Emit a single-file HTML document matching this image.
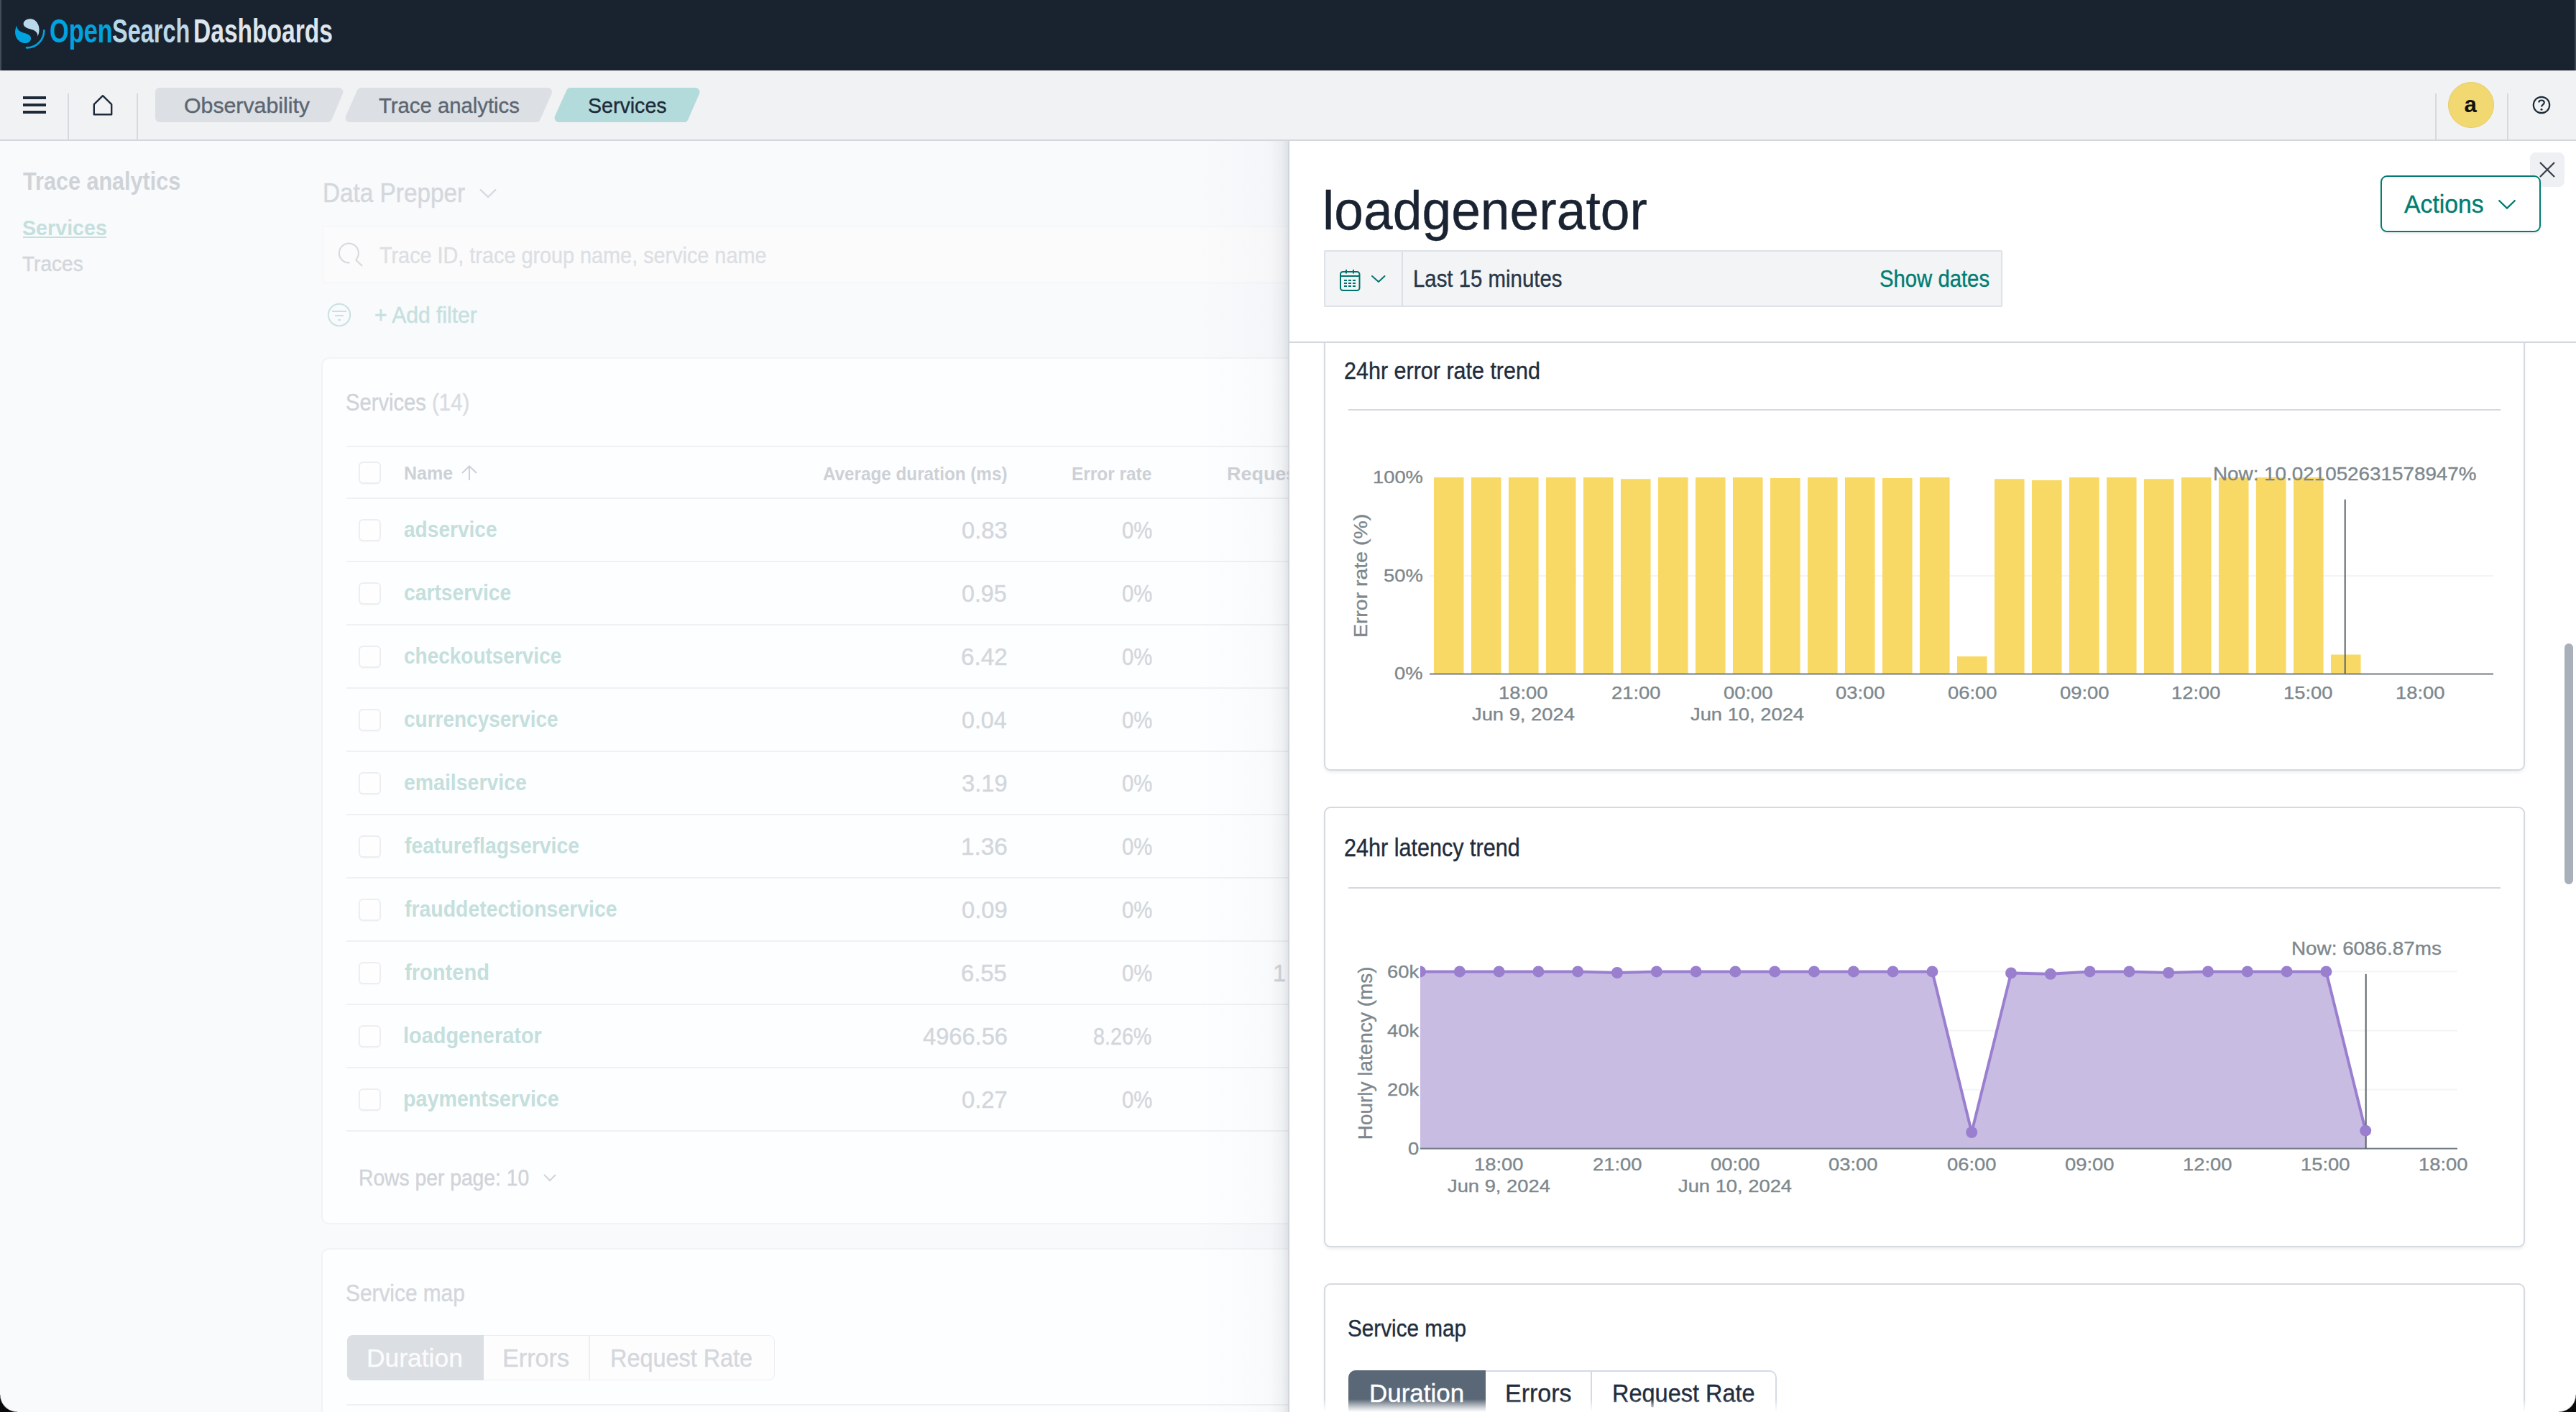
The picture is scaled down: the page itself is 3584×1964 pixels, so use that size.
<!DOCTYPE html><html><head><meta charset="utf-8"><title>OpenSearch Dashboards - Services</title><style>
html,body{margin:0;padding:0;width:3584px;height:1964px;overflow:hidden;background:#fff;font-family:"Liberation Sans",sans-serif}
.t{position:absolute;white-space:nowrap;transform-origin:0 0}
</style></head><body>
<div style="position:absolute;left:0px;top:0px;width:3584px;height:98px;background:#18232f"></div>
<div style="position:absolute;left:0px;top:0px;width:2px;height:98px;background:#444d57"></div>
<div style="position:absolute;left:3582px;top:0px;width:2px;height:98px;background:#3f4751"></div>
<svg style="position:absolute;left:0;top:0" width="100" height="98" viewBox="0 0 100 98">
<path d="M52.4,50.8 C57,42 54.5,28.5 43.5,26.3 C37,25.2 31.8,29.5 32.8,34.3 C33.8,38.8 40.5,39.8 45.8,41.6 C50,43.2 52.8,46.5 52.4,50.8 Z" fill="#b9d9eb"/>
<path d="M23.4,35.8 C18.6,44 21.2,56.8 32,59.7 C38.5,61.3 43.6,57.6 43,52.4 C42.4,47.8 35.5,46.7 30.3,44.8 C26.2,43.3 23.6,40.2 23.4,35.8 Z" fill="#00a3e0"/>
<path d="M61.3,42.4 A24,24 0 0 1 37,66.4" fill="none" stroke="#00a3e0" stroke-width="2.6" stroke-linecap="round"/>
</svg>
<div class="t" style="font-family:'Liberation Sans';font-size:45.78px;line-height:45.78px;font-weight:700;color:#00a3e0;left:68.80px;top:21.20px;transform:scaleX(0.7500)">Open</div>
<div class="t" style="font-family:'Liberation Sans';font-size:45.78px;line-height:45.78px;font-weight:700;color:#b9d9eb;left:155.59px;top:21.20px;transform:scaleX(0.7094)">Search</div>
<div class="t" style="font-family:'Liberation Sans';font-size:45.78px;line-height:45.78px;font-weight:700;color:#dfe5ec;left:269.20px;top:21.20px;transform:scaleX(0.7331)">Dashboards</div>
<div style="position:absolute;left:0px;top:98px;width:3584px;height:96px;background:#f1f2f4;border-bottom:2px solid #d3d7dc"></div>
<div style="position:absolute;left:32px;top:134px;width:32px;height:4px;background:#1d2a3a"></div>
<div style="position:absolute;left:32px;top:144px;width:32px;height:4px;background:#1d2a3a"></div>
<div style="position:absolute;left:32px;top:154px;width:32px;height:4px;background:#1d2a3a"></div>
<div style="position:absolute;left:94px;top:130px;width:2px;height:65px;background:#d6d9de"></div>
<div style="position:absolute;left:190px;top:130px;width:2px;height:65px;background:#d6d9de"></div>
<div style="position:absolute;left:3388px;top:130px;width:2px;height:65px;background:#d6d9de"></div>
<div style="position:absolute;left:3488px;top:130px;width:2px;height:65px;background:#d6d9de"></div>
<svg style="position:absolute;left:0;top:98px" width="1000" height="96" viewBox="0 98 1000 96">
<path d="M143,133.2 L130.8,145.2 L130.8,159.2 L155.2,159.2 L155.2,145.2 Z" fill="none" stroke="#1d2a3a" stroke-width="2.4" stroke-linejoin="round"/>
<path d="M222,128 L471.5,128 L456,164 L222,164 Z" fill="#dcdfe3" stroke="#dcdfe3" stroke-width="12" stroke-linejoin="round"/>
<path d="M502.5,128 L762,128 L746,164 L486.5,164 Z" fill="#dcdfe3" stroke="#dcdfe3" stroke-width="12" stroke-linejoin="round"/>
<path d="M793.8,128 L967.4,128 L951.8,164 L777.5,164 Z" fill="#b4dbdb" stroke="#b4dbdb" stroke-width="12" stroke-linejoin="round"/>
</svg>
<div class="t" style="font-family:'Liberation Sans';font-size:30.23px;line-height:30.23px;font-weight:400;color:#5b6672;-webkit-text-stroke:0.4px #5b6672;left:255.60px;top:131.60px;transform:scaleX(1.0017)">Observability</div>
<div class="t" style="font-family:'Liberation Sans';font-size:30.23px;line-height:30.23px;font-weight:400;color:#5b6672;-webkit-text-stroke:0.4px #5b6672;left:526.63px;top:131.60px;transform:scaleX(0.9690)">Trace analytics</div>
<div class="t" style="font-family:'Liberation Sans';font-size:30.23px;line-height:30.23px;font-weight:400;color:#1e2b3a;-webkit-text-stroke:0.4px #1e2b3a;left:817.65px;top:131.60px;transform:scaleX(0.9456)">Services</div>
<div style="position:absolute;left:3406px;top:114px;width:64px;height:64px;background:#f1d870;border-radius:50%;box-sizing:border-box;border:1px solid #e6cd66"></div>
<div class="t" style="font-family:'Liberation Sans';font-size:31.25px;line-height:31.25px;font-weight:700;color:#111;left:3428.50px;top:130.00px;transform:scaleX(1.0000)">a</div>
<svg style="position:absolute;left:3500px;top:110px" width="80" height="72" viewBox="3500 110 80 72">
<circle cx="3536" cy="146" r="11.2" fill="none" stroke="#1d2a3a" stroke-width="2.2"/>
<path d="M3532.3,142.6 C3532.3,138.6 3539.8,138.4 3539.8,142.6 C3539.8,145.6 3536,145.6 3536,148.6" fill="none" stroke="#1d2a3a" stroke-width="2.2"/>
<circle cx="3536" cy="152.2" r="1.5" fill="#1d2a3a"/>
</svg>
<div style="position:absolute;left:0;top:196px;width:1793px;height:1768px;overflow:hidden;background:#f8fafc"><div style="position:absolute;left:0;top:-196px;width:1793px;height:1964px">
<div class="t" style="font-family:'Liberation Sans';font-size:35.32px;line-height:35.32px;font-weight:700;color:#cfd3d8;left:32.20px;top:234.00px;transform:scaleX(0.8659)">Trace analytics</div>
<div class="t" style="font-family:'Liberation Sans';font-size:30.23px;line-height:30.23px;font-weight:700;color:#c4dfdc;left:31.05px;top:302.40px;transform:scaleX(0.9484)">Services</div>
<div style="position:absolute;left:32px;top:329px;width:116px;height:2px;background:#c4dfdc"></div>
<div class="t" style="font-family:'Liberation Sans';font-size:30.09px;line-height:30.09px;font-weight:400;color:#d3d6db;-webkit-text-stroke:0.4px #d3d6db;left:31.07px;top:352.40px;transform:scaleX(0.9326)">Traces</div>
<div class="t" style="font-family:'Liberation Sans';font-size:36.34px;line-height:36.34px;font-weight:400;color:#d4d7dc;-webkit-text-stroke:0.4px #d4d7dc;left:448.65px;top:250.80px;transform:scaleX(0.9169)">Data Prepper</div>
<div style="position:absolute;left:449px;top:315px;width:1400px;height:79px;background:#fbfbfc;box-shadow:inset 0 0 0 1px #f2f3f5"></div>
<div class="t" style="font-family:'Liberation Sans';font-size:32.27px;line-height:32.27px;font-weight:400;color:#dcdfe3;-webkit-text-stroke:0.4px #dcdfe3;left:527.81px;top:338.60px;transform:scaleX(0.8927)">Trace ID, trace group name, service name</div>
<div class="t" style="font-family:'Liberation Sans';font-size:32.27px;line-height:32.27px;font-weight:400;color:#c5e0de;-webkit-text-stroke:0.4px #c5e0de;left:521.07px;top:422.00px;transform:scaleX(0.9309)">+ Add filter</div>
<div style="position:absolute;left:449px;top:499px;width:1500px;height:1202px;background:#fdfeff;border-radius:9px;box-shadow:0 0 0 2px #f2f3f5"></div>
<div class="t" style="font-family:'Liberation Sans';font-size:32.41px;line-height:32.41px;font-weight:400;color:#cfd3d8;-webkit-text-stroke:0.4px #cfd3d8;left:481.20px;top:544.30px;transform:scaleX(0.9008)">Services</div>
<div class="t" style="font-family:'Liberation Sans';font-size:32.41px;line-height:32.41px;font-weight:400;color:#d9dce0;-webkit-text-stroke:0.4px #d9dce0;left:600.89px;top:544.30px;transform:scaleX(0.9074)">(14)</div>
<div class="t" style="font-family:'Liberation Sans';font-size:26.6px;line-height:26.6px;font-weight:700;color:#cdd1d6;left:561.62px;top:645.30px;transform:scaleX(0.9414)">Name</div>
<div class="t" style="font-family:'Liberation Sans';font-size:26.6px;line-height:26.6px;font-weight:700;color:#cdd1d6;left:1145.19px;top:645.70px;transform:scaleX(0.9118)">Average duration (ms)</div>
<div class="t" style="font-family:'Liberation Sans';font-size:26.6px;line-height:26.6px;font-weight:700;color:#cdd1d6;left:1490.96px;top:645.70px;transform:scaleX(0.9176)">Error rate</div>
<div class="t" style="font-family:'Liberation Sans';font-size:26.6px;line-height:26.6px;font-weight:700;color:#cdd1d6;left:1707.47px;top:645.70px;transform:scaleX(1.0127)">Request rate</div>
<div style="position:absolute;left:482px;top:620px;width:1400px;height:2px;background:#f0f1f3"></div>
<div style="position:absolute;left:482px;top:692px;width:1400px;height:2px;background:#f0f1f3"></div>
<div style="position:absolute;left:482px;top:780px;width:1400px;height:2px;background:#f0f1f3"></div>
<div style="position:absolute;left:482px;top:868px;width:1400px;height:2px;background:#f0f1f3"></div>
<div style="position:absolute;left:482px;top:956px;width:1400px;height:2px;background:#f0f1f3"></div>
<div style="position:absolute;left:482px;top:1044px;width:1400px;height:2px;background:#f0f1f3"></div>
<div style="position:absolute;left:482px;top:1132px;width:1400px;height:2px;background:#f0f1f3"></div>
<div style="position:absolute;left:482px;top:1220px;width:1400px;height:2px;background:#f0f1f3"></div>
<div style="position:absolute;left:482px;top:1308px;width:1400px;height:2px;background:#f0f1f3"></div>
<div style="position:absolute;left:482px;top:1396px;width:1400px;height:2px;background:#f0f1f3"></div>
<div style="position:absolute;left:482px;top:1484px;width:1400px;height:2px;background:#f0f1f3"></div>
<div style="position:absolute;left:482px;top:1572px;width:1400px;height:2px;background:#f0f1f3"></div>
<div style="position:absolute;left:498.5px;top:642px;width:31px;height:31px;box-sizing:border-box;border:2px solid #eceef1;border-radius:6px;background:#fefeff;box-shadow:0 1px 2px rgba(0,0,0,0.03)"></div>
<div style="position:absolute;left:498.5px;top:721.6px;width:31px;height:31px;box-sizing:border-box;border:2px solid #eceef1;border-radius:6px;background:#fefeff;box-shadow:0 1px 2px rgba(0,0,0,0.03)"></div>
<div style="position:absolute;left:498.5px;top:809.6px;width:31px;height:31px;box-sizing:border-box;border:2px solid #eceef1;border-radius:6px;background:#fefeff;box-shadow:0 1px 2px rgba(0,0,0,0.03)"></div>
<div style="position:absolute;left:498.5px;top:897.6px;width:31px;height:31px;box-sizing:border-box;border:2px solid #eceef1;border-radius:6px;background:#fefeff;box-shadow:0 1px 2px rgba(0,0,0,0.03)"></div>
<div style="position:absolute;left:498.5px;top:985.6px;width:31px;height:31px;box-sizing:border-box;border:2px solid #eceef1;border-radius:6px;background:#fefeff;box-shadow:0 1px 2px rgba(0,0,0,0.03)"></div>
<div style="position:absolute;left:498.5px;top:1073.6px;width:31px;height:31px;box-sizing:border-box;border:2px solid #eceef1;border-radius:6px;background:#fefeff;box-shadow:0 1px 2px rgba(0,0,0,0.03)"></div>
<div style="position:absolute;left:498.5px;top:1161.6px;width:31px;height:31px;box-sizing:border-box;border:2px solid #eceef1;border-radius:6px;background:#fefeff;box-shadow:0 1px 2px rgba(0,0,0,0.03)"></div>
<div style="position:absolute;left:498.5px;top:1249.6px;width:31px;height:31px;box-sizing:border-box;border:2px solid #eceef1;border-radius:6px;background:#fefeff;box-shadow:0 1px 2px rgba(0,0,0,0.03)"></div>
<div style="position:absolute;left:498.5px;top:1337.6px;width:31px;height:31px;box-sizing:border-box;border:2px solid #eceef1;border-radius:6px;background:#fefeff;box-shadow:0 1px 2px rgba(0,0,0,0.03)"></div>
<div style="position:absolute;left:498.5px;top:1425.6px;width:31px;height:31px;box-sizing:border-box;border:2px solid #eceef1;border-radius:6px;background:#fefeff;box-shadow:0 1px 2px rgba(0,0,0,0.03)"></div>
<div style="position:absolute;left:498.5px;top:1513.6px;width:31px;height:31px;box-sizing:border-box;border:2px solid #eceef1;border-radius:6px;background:#fefeff;box-shadow:0 1px 2px rgba(0,0,0,0.03)"></div>
<div class="t" style="font-family:'Liberation Sans';font-size:31.44px;line-height:31.44px;font-weight:700;color:#c4dfdc;left:562.11px;top:720.80px;transform:scaleX(0.8930)">adservice</div>
<div class="t" style="font-family:'Liberation Sans';font-size:32.7px;line-height:32.7px;font-weight:400;color:#d3d6db;-webkit-text-stroke:0.4px #d3d6db;left:1338.40px;top:722.00px;transform:scaleX(1.0016)">0.83</div>
<div class="t" style="font-family:'Liberation Sans';font-size:32.7px;line-height:32.7px;font-weight:400;color:#d3d6db;-webkit-text-stroke:0.4px #d3d6db;left:1560.80px;top:722.00px;transform:scaleX(0.8956)">0%</div>
<div class="t" style="font-family:'Liberation Sans';font-size:31.44px;line-height:31.44px;font-weight:700;color:#c4dfdc;left:562.10px;top:808.80px;transform:scaleX(0.8982)">cartservice</div>
<div class="t" style="font-family:'Liberation Sans';font-size:32.7px;line-height:32.7px;font-weight:400;color:#d3d6db;-webkit-text-stroke:0.4px #d3d6db;left:1338.41px;top:810.00px;transform:scaleX(0.9855)">0.95</div>
<div class="t" style="font-family:'Liberation Sans';font-size:32.7px;line-height:32.7px;font-weight:400;color:#d3d6db;-webkit-text-stroke:0.4px #d3d6db;left:1560.80px;top:810.00px;transform:scaleX(0.8956)">0%</div>
<div class="t" style="font-family:'Liberation Sans';font-size:31.44px;line-height:31.44px;font-weight:700;color:#c4dfdc;left:562.11px;top:896.80px;transform:scaleX(0.8898)">checkoutservice</div>
<div class="t" style="font-family:'Liberation Sans';font-size:32.7px;line-height:32.7px;font-weight:400;color:#d3d6db;-webkit-text-stroke:0.4px #d3d6db;left:1337.36px;top:898.00px;transform:scaleX(1.0183)">6.42</div>
<div class="t" style="font-family:'Liberation Sans';font-size:32.7px;line-height:32.7px;font-weight:400;color:#d3d6db;-webkit-text-stroke:0.4px #d3d6db;left:1560.80px;top:898.00px;transform:scaleX(0.8956)">0%</div>
<div class="t" style="font-family:'Liberation Sans';font-size:31.44px;line-height:31.44px;font-weight:700;color:#c4dfdc;left:562.11px;top:984.80px;transform:scaleX(0.8900)">currencyservice</div>
<div class="t" style="font-family:'Liberation Sans';font-size:32.7px;line-height:32.7px;font-weight:400;color:#d3d6db;-webkit-text-stroke:0.4px #d3d6db;left:1338.41px;top:986.00px;transform:scaleX(0.9855)">0.04</div>
<div class="t" style="font-family:'Liberation Sans';font-size:32.7px;line-height:32.7px;font-weight:400;color:#d3d6db;-webkit-text-stroke:0.4px #d3d6db;left:1560.80px;top:986.00px;transform:scaleX(0.8956)">0%</div>
<div class="t" style="font-family:'Liberation Sans';font-size:31.44px;line-height:31.44px;font-weight:700;color:#c4dfdc;left:562.10px;top:1072.80px;transform:scaleX(0.9048)">emailservice</div>
<div class="t" style="font-family:'Liberation Sans';font-size:32.7px;line-height:32.7px;font-weight:400;color:#d3d6db;-webkit-text-stroke:0.4px #d3d6db;left:1338.40px;top:1074.00px;transform:scaleX(1.0016)">3.19</div>
<div class="t" style="font-family:'Liberation Sans';font-size:32.7px;line-height:32.7px;font-weight:400;color:#d3d6db;-webkit-text-stroke:0.4px #d3d6db;left:1560.80px;top:1074.00px;transform:scaleX(0.8956)">0%</div>
<div class="t" style="font-family:'Liberation Sans';font-size:31.44px;line-height:31.44px;font-weight:700;color:#c4dfdc;left:563.00px;top:1160.80px;transform:scaleX(0.9030)">featureflagservice</div>
<div class="t" style="font-family:'Liberation Sans';font-size:32.7px;line-height:32.7px;font-weight:400;color:#d3d6db;-webkit-text-stroke:0.4px #d3d6db;left:1337.36px;top:1162.00px;transform:scaleX(1.0183)">1.36</div>
<div class="t" style="font-family:'Liberation Sans';font-size:32.7px;line-height:32.7px;font-weight:400;color:#d3d6db;-webkit-text-stroke:0.4px #d3d6db;left:1560.80px;top:1162.00px;transform:scaleX(0.8956)">0%</div>
<div class="t" style="font-family:'Liberation Sans';font-size:31.44px;line-height:31.44px;font-weight:700;color:#c4dfdc;left:563.00px;top:1248.80px;transform:scaleX(0.9049)">frauddetectionservice</div>
<div class="t" style="font-family:'Liberation Sans';font-size:32.7px;line-height:32.7px;font-weight:400;color:#d3d6db;-webkit-text-stroke:0.4px #d3d6db;left:1338.40px;top:1250.00px;transform:scaleX(1.0016)">0.09</div>
<div class="t" style="font-family:'Liberation Sans';font-size:32.7px;line-height:32.7px;font-weight:400;color:#d3d6db;-webkit-text-stroke:0.4px #d3d6db;left:1560.80px;top:1250.00px;transform:scaleX(0.8956)">0%</div>
<div class="t" style="font-family:'Liberation Sans';font-size:31.44px;line-height:31.44px;font-weight:700;color:#c4dfdc;left:563.00px;top:1336.80px;transform:scaleX(0.9254)">frontend</div>
<div class="t" style="font-family:'Liberation Sans';font-size:32.7px;line-height:32.7px;font-weight:400;color:#d3d6db;-webkit-text-stroke:0.4px #d3d6db;left:1337.40px;top:1338.00px;transform:scaleX(1.0016)">6.55</div>
<div class="t" style="font-family:'Liberation Sans';font-size:32.7px;line-height:32.7px;font-weight:400;color:#d3d6db;-webkit-text-stroke:0.4px #d3d6db;left:1560.80px;top:1338.00px;transform:scaleX(0.8956)">0%</div>
<div class="t" style="font-family:'Liberation Sans';font-size:31.44px;line-height:31.44px;font-weight:700;color:#c4dfdc;left:561.16px;top:1424.80px;transform:scaleX(0.9198)">loadgenerator</div>
<div class="t" style="font-family:'Liberation Sans';font-size:32.7px;line-height:32.7px;font-weight:400;color:#d3d6db;-webkit-text-stroke:0.4px #d3d6db;left:1283.70px;top:1426.00px;transform:scaleX(0.9983)">4966.56</div>
<div class="t" style="font-family:'Liberation Sans';font-size:32.7px;line-height:32.7px;font-weight:400;color:#d3d6db;-webkit-text-stroke:0.4px #d3d6db;left:1521.22px;top:1426.00px;transform:scaleX(0.8780)">8.26%</div>
<div class="t" style="font-family:'Liberation Sans';font-size:31.44px;line-height:31.44px;font-weight:700;color:#c4dfdc;left:561.18px;top:1512.80px;transform:scaleX(0.9119)">paymentservice</div>
<div class="t" style="font-family:'Liberation Sans';font-size:32.7px;line-height:32.7px;font-weight:400;color:#d3d6db;-webkit-text-stroke:0.4px #d3d6db;left:1338.40px;top:1514.00px;transform:scaleX(1.0016)">0.27</div>
<div class="t" style="font-family:'Liberation Sans';font-size:32.7px;line-height:32.7px;font-weight:400;color:#d3d6db;-webkit-text-stroke:0.4px #d3d6db;left:1560.80px;top:1514.00px;transform:scaleX(0.8956)">0%</div>
<div class="t" style="font-family:'Liberation Sans';font-size:32.7px;line-height:32.7px;font-weight:400;color:#d3d6db;-webkit-text-stroke:0.4px #d3d6db;left:1771.00px;top:1338.00px;transform:scaleX(1.0000)">1</div>
<div class="t" style="font-family:'Liberation Sans';font-size:31.4px;line-height:31.4px;font-weight:400;color:#d0d3d8;-webkit-text-stroke:0.4px #d0d3d8;left:499.20px;top:1622.60px;transform:scaleX(0.9000)">Rows per page: 10</div>
<div style="position:absolute;left:449px;top:1738px;width:1500px;height:400px;background:#fdfeff;border-radius:9px;box-shadow:0 0 0 2px #f2f3f5"></div>
<div class="t" style="font-family:'Liberation Sans';font-size:33.87px;line-height:33.87px;font-weight:400;color:#d3d6db;-webkit-text-stroke:0.4px #d3d6db;left:480.84px;top:1782.00px;transform:scaleX(0.8811)">Service map</div>
<div style="position:absolute;left:482.6px;top:1857.4px;width:595px;height:63px;box-sizing:border-box;border:1px solid #eceef1;border-radius:8px;background:#fdfdfe"></div>
<div style="position:absolute;left:482.6px;top:1857.4px;width:190px;height:63px;background:#dbdee2;border-radius:8px 0 0 8px"></div>
<div style="position:absolute;left:819px;top:1858px;width:1.5px;height:62px;background:#eceef1"></div>
<div class="t" style="font-family:'Liberation Sans';font-size:35.47px;line-height:35.47px;font-weight:400;color:#fbfbfc;-webkit-text-stroke:0.4px #fbfbfc;left:510.00px;top:1871.90px;transform:scaleX(0.9984)">Duration</div>
<div class="t" style="font-family:'Liberation Sans';font-size:35.47px;line-height:35.47px;font-weight:400;color:#d4d7dc;-webkit-text-stroke:0.4px #d4d7dc;left:698.71px;top:1871.90px;transform:scaleX(0.9630)">Errors</div>
<div class="t" style="font-family:'Liberation Sans';font-size:35.47px;line-height:35.47px;font-weight:400;color:#d4d7dc;-webkit-text-stroke:0.4px #d4d7dc;left:849.46px;top:1871.90px;transform:scaleX(0.9131)">Request Rate</div>
<div style="position:absolute;left:482px;top:1953px;width:1400px;height:2px;background:#eff1f3"></div>
<svg style="position:absolute;left:0;top:195px" width="1793" height="1769" viewBox="0 195 1793 1769">
<path d="M668,263.5 L679,274 L690,263.5" fill="none" stroke="#d4d7dc" stroke-width="2.2"/>
<path d="M486.5,365.5 A13.5,13.5 0 1 1 495,361.5" fill="none" stroke="#d5d8dc" stroke-width="2"/>
<path d="M495,361.5 L504,370" stroke="#d5d8dc" stroke-width="2"/>
<circle cx="472" cy="438" r="15.2" fill="none" stroke="#c8e2df" stroke-width="2"/>
<path d="M462,433 L482,433 M466,439 L478,439 M470,445 L474,445" stroke="#c8e2df" stroke-width="2"/>
<path d="M653,649 L653,668 M643,658 L653,648.5 L663,658" fill="none" stroke="#cdd1d6" stroke-width="2"/>
<path d="M757,1634 L765,1642 L773,1634" fill="none" stroke="#d0d3d8" stroke-width="2"/>
</svg>
</div></div>
<div style="position:absolute;left:1660px;top:196px;width:133px;height:1768px;background:linear-gradient(to right, rgba(60,70,90,0) 0%, rgba(60,70,90,0.01) 50%, rgba(60,70,90,0.025) 80%, rgba(60,70,90,0.07) 93%, rgba(60,70,90,0.15) 100%)"></div>
<div style="position:absolute;left:1794px;top:196px;width:1790px;height:1768px;background:#fff;box-shadow:-1.5px 0 0 #c9ced6"></div>
<div class="t" style="font-family:'Liberation Sans';font-size:76.52px;line-height:76.52px;font-weight:400;color:#1a2332;-webkit-text-stroke:0.4px #1a2332;left:1840.21px;top:255.20px;transform:scaleX(0.9571)">loadgenerator</div>
<div style="position:absolute;left:1842px;top:348px;width:944px;height:79px;box-sizing:border-box;background:#f2f4f6;border:2px solid #dde2e8;border-radius:2px"></div>
<div style="position:absolute;left:1950px;top:350px;width:1.5px;height:75px;background:#dde1e6"></div>
<div class="t" style="font-family:'Liberation Sans';font-size:32.41px;line-height:32.41px;font-weight:400;color:#293747;-webkit-text-stroke:0.4px #293747;left:1966.28px;top:372.30px;transform:scaleX(0.9067)">Last 15 minutes</div>
<div class="t" style="font-family:'Liberation Sans';font-size:32.41px;line-height:32.41px;font-weight:400;color:#017d73;-webkit-text-stroke:0.4px #017d73;left:2615.19px;top:372.30px;transform:scaleX(0.9036)">Show dates</div>
<svg style="position:absolute;left:1850px;top:360px" width="100" height="60" viewBox="1850 360 100 60">
<rect x="1865" y="378" width="26.5" height="26" rx="3.5" fill="none" stroke="#00726b" stroke-width="2"/>
<path d="M1865,384 L1891,384 M1873,375 L1873,380.5 M1883,375 L1883,380.5" stroke="#00726b" stroke-width="2"/>
<path d="M1870,390 h4 m2,0 h4 m2,0 h4 M1870,394 h4 m2,0 h4 m2,0 h4 M1870,398 h4 m2,0 h4 m2,0 h4" stroke="#00726b" stroke-width="2"/>
<path d="M1909,384 L1918,392 L1926.5,384" fill="none" stroke="#00726b" stroke-width="1.9" stroke-linejoin="round" stroke-linecap="round"/>
</svg>
<div style="position:absolute;left:3520px;top:212px;width:48px;height:48px;background:#eef0f3;border-radius:8px"></div>
<svg style="position:absolute;left:3520px;top:212px" width="48" height="48" viewBox="3520 212 48 48">
<path d="M3534,226 L3554,246 M3554,226 L3534,246" stroke="#343d48" stroke-width="2.2"/>
</svg>
<div style="position:absolute;left:3312px;top:244px;width:223px;height:79px;box-sizing:border-box;background:#fff;border:2px solid #017d73;border-radius:9px;box-shadow:0 2px 3px rgba(0,0,0,0.08)"></div>
<div class="t" style="font-family:'Liberation Sans';font-size:35.47px;line-height:35.47px;font-weight:400;color:#017d73;-webkit-text-stroke:0.4px #017d73;left:3345.20px;top:266.80px;transform:scaleX(0.9522)">Actions</div>
<svg style="position:absolute;left:3470px;top:270px" width="40" height="30" viewBox="3470 270 40 30">
<path d="M3476.5,278.5 L3488,289.5 L3499.5,278.5" fill="none" stroke="#017d73" stroke-width="2.4"/>
</svg>
<div style="position:absolute;left:1793px;top:475px;width:1791px;height:2px;background:#d3d8de"></div>
<div style="position:absolute;left:1793px;top:477px;width:1791px;height:1487px;overflow:hidden">
<div style="position:absolute;left:-1793px;top:-477px;width:3584px;height:1964px">
<div style="position:absolute;left:1842px;top:300px;width:1671px;height:772px;box-sizing:border-box;background:#fff;border:2px solid #d5dae0;border-radius:9px;box-shadow:0 3px 4px rgba(0,0,0,0.06)"></div>
<div style="position:absolute;left:1842px;top:1122px;width:1671px;height:613px;box-sizing:border-box;background:#fff;border:2px solid #d5dae0;border-radius:9px;box-shadow:0 3px 4px rgba(0,0,0,0.06)"></div>
<div style="position:absolute;left:1842px;top:1785px;width:1671px;height:615px;box-sizing:border-box;background:#fff;border:2px solid #d5dae0;border-radius:9px;box-shadow:0 3px 4px rgba(0,0,0,0.06)"></div>
<div style="position:absolute;left:1876px;top:569px;width:1603px;height:2px;background:#d3d8de"></div>
<div style="position:absolute;left:1876px;top:1234px;width:1603px;height:2px;background:#d3d8de"></div>
<div class="t" style="font-family:'Liberation Sans';font-size:32.85px;line-height:32.85px;font-weight:400;color:#1f2d3d;-webkit-text-stroke:0.4px #1f2d3d;left:1869.74px;top:499.60px;transform:scaleX(0.9290)">24hr error rate trend</div>
<div class="t" style="font-family:'Liberation Sans';font-size:34.3px;line-height:34.3px;font-weight:400;color:#1f2d3d;-webkit-text-stroke:0.4px #1f2d3d;left:1870.22px;top:1161.60px;transform:scaleX(0.8915)">24hr latency trend</div>
<div class="t" style="font-family:'Liberation Sans';font-size:33.14px;line-height:33.14px;font-weight:400;color:#1f2d3d;-webkit-text-stroke:0.4px #1f2d3d;left:1874.91px;top:1830.80px;transform:scaleX(0.8967)">Service map</div>
<div style="position:absolute;left:1876px;top:1906px;width:596px;height:80px;box-sizing:border-box;border:2px solid #d3dae6;border-radius:10px;background:#fff"></div>
<div style="position:absolute;left:1876px;top:1906px;width:191px;height:80px;background:#5a6776;border-radius:10px 0 0 10px"></div>
<div style="position:absolute;left:2213px;top:1907px;width:2px;height:78px;background:#d3dae6"></div>
<div class="t" style="font-family:'Liberation Sans';font-size:35.47px;line-height:35.47px;font-weight:400;color:#ffffff;-webkit-text-stroke:0.4px #ffffff;left:1905.04px;top:1921.10px;transform:scaleX(0.9860)">Duration</div>
<div class="t" style="font-family:'Liberation Sans';font-size:35.47px;line-height:35.47px;font-weight:400;color:#1f2d3d;-webkit-text-stroke:0.4px #1f2d3d;left:2094.12px;top:1921.10px;transform:scaleX(0.9587)">Errors</div>
<div class="t" style="font-family:'Liberation Sans';font-size:35.47px;line-height:35.47px;font-weight:400;color:#1f2d3d;-webkit-text-stroke:0.4px #1f2d3d;left:2243.25px;top:1921.10px;transform:scaleX(0.9155)">Request Rate</div>
<svg style="position:absolute;left:0;top:0" width="3584" height="1964" viewBox="0 0 3584 1964">
<rect x="1989" y="800" width="1480" height="2" fill="#f3f4f5"/>
<rect x="1994.95" y="664.00" width="41.6" height="273.00" fill="#f9d966"/>
<rect x="2046.95" y="664.00" width="41.6" height="273.00" fill="#f9d966"/>
<rect x="2098.95" y="664.00" width="41.6" height="273.00" fill="#f9d966"/>
<rect x="2150.95" y="664.00" width="41.6" height="273.00" fill="#f9d966"/>
<rect x="2202.95" y="664.00" width="41.6" height="273.00" fill="#f9d966"/>
<rect x="2254.95" y="666.20" width="41.6" height="270.80" fill="#f9d966"/>
<rect x="2306.95" y="664.00" width="41.6" height="273.00" fill="#f9d966"/>
<rect x="2358.95" y="664.00" width="41.6" height="273.00" fill="#f9d966"/>
<rect x="2410.95" y="664.00" width="41.6" height="273.00" fill="#f9d966"/>
<rect x="2462.95" y="665.00" width="41.6" height="272.00" fill="#f9d966"/>
<rect x="2514.95" y="664.00" width="41.6" height="273.00" fill="#f9d966"/>
<rect x="2566.95" y="664.00" width="41.6" height="273.00" fill="#f9d966"/>
<rect x="2618.95" y="665.00" width="41.6" height="272.00" fill="#f9d966"/>
<rect x="2670.95" y="664.00" width="41.6" height="273.00" fill="#f9d966"/>
<rect x="2722.95" y="913.00" width="41.6" height="24.00" fill="#f9d966"/>
<rect x="2774.95" y="666.20" width="41.6" height="270.80" fill="#f9d966"/>
<rect x="2826.95" y="668.00" width="41.6" height="269.00" fill="#f9d966"/>
<rect x="2878.95" y="664.00" width="41.6" height="273.00" fill="#f9d966"/>
<rect x="2930.95" y="664.00" width="41.6" height="273.00" fill="#f9d966"/>
<rect x="2982.95" y="666.20" width="41.6" height="270.80" fill="#f9d966"/>
<rect x="3034.95" y="664.00" width="41.6" height="273.00" fill="#f9d966"/>
<rect x="3086.95" y="664.00" width="41.6" height="273.00" fill="#f9d966"/>
<rect x="3138.95" y="664.00" width="41.6" height="273.00" fill="#f9d966"/>
<rect x="3190.95" y="664.00" width="41.6" height="273.00" fill="#f9d966"/>
<rect x="3242.95" y="910.50" width="41.6" height="26.50" fill="#f9d966"/>
<rect x="1989" y="936.5" width="1480" height="2" fill="#737d86"/>
<rect x="3261.7" y="694.7" width="2" height="242.3" fill="#5a636b"/>
<rect x="1976" y="1350.4" width="1443" height="2" fill="#f3f4f5"/>
<rect x="1976" y="1432.5" width="1443" height="2" fill="#f3f4f5"/>
<rect x="1976" y="1514.6" width="1443" height="2" fill="#f3f4f5"/>
<polygon points="1976,1597.6 1976.00,1351.40 2030.80,1351.40 2085.60,1351.40 2140.40,1351.40 2195.20,1351.40 2250.00,1353.00 2304.80,1351.40 2359.60,1351.40 2414.40,1351.40 2469.20,1351.40 2524.00,1351.40 2578.80,1351.40 2633.60,1351.40 2688.40,1351.40 2743.20,1575.00 2798.00,1353.40 2852.80,1354.80 2907.60,1351.40 2962.40,1351.40 3017.20,1353.00 3072.00,1351.40 3126.80,1351.40 3181.60,1351.40 3236.40,1351.40 3291.20,1572.70 3291.20,1597.6" fill="#c9bce3"/>
<polyline points="1976.00,1351.40 2030.80,1351.40 2085.60,1351.40 2140.40,1351.40 2195.20,1351.40 2250.00,1353.00 2304.80,1351.40 2359.60,1351.40 2414.40,1351.40 2469.20,1351.40 2524.00,1351.40 2578.80,1351.40 2633.60,1351.40 2688.40,1351.40 2743.20,1575.00 2798.00,1353.40 2852.80,1354.80 2907.60,1351.40 2962.40,1351.40 3017.20,1353.00 3072.00,1351.40 3126.80,1351.40 3181.60,1351.40 3236.40,1351.40 3291.20,1572.70" fill="none" stroke="#9a7fcf" stroke-width="4" stroke-linejoin="round"/>
<rect x="1976" y="1596.6" width="1443" height="2" fill="#737d86"/>
<rect x="3290.7" y="1354.8" width="2" height="242.8" fill="#5a636b"/>
<clipPath id="c2"><rect x="1976" y="1300" width="1500" height="400"/></clipPath><g clip-path="url(#c2)">
<circle cx="1976.00" cy="1351.40" r="8" fill="#9a7fcf"/>
<circle cx="2030.80" cy="1351.40" r="8" fill="#9a7fcf"/>
<circle cx="2085.60" cy="1351.40" r="8" fill="#9a7fcf"/>
<circle cx="2140.40" cy="1351.40" r="8" fill="#9a7fcf"/>
<circle cx="2195.20" cy="1351.40" r="8" fill="#9a7fcf"/>
<circle cx="2250.00" cy="1353.00" r="8" fill="#9a7fcf"/>
<circle cx="2304.80" cy="1351.40" r="8" fill="#9a7fcf"/>
<circle cx="2359.60" cy="1351.40" r="8" fill="#9a7fcf"/>
<circle cx="2414.40" cy="1351.40" r="8" fill="#9a7fcf"/>
<circle cx="2469.20" cy="1351.40" r="8" fill="#9a7fcf"/>
<circle cx="2524.00" cy="1351.40" r="8" fill="#9a7fcf"/>
<circle cx="2578.80" cy="1351.40" r="8" fill="#9a7fcf"/>
<circle cx="2633.60" cy="1351.40" r="8" fill="#9a7fcf"/>
<circle cx="2688.40" cy="1351.40" r="8" fill="#9a7fcf"/>
<circle cx="2743.20" cy="1575.00" r="8" fill="#9a7fcf"/>
<circle cx="2798.00" cy="1353.40" r="8" fill="#9a7fcf"/>
<circle cx="2852.80" cy="1354.80" r="8" fill="#9a7fcf"/>
<circle cx="2907.60" cy="1351.40" r="8" fill="#9a7fcf"/>
<circle cx="2962.40" cy="1351.40" r="8" fill="#9a7fcf"/>
<circle cx="3017.20" cy="1353.00" r="8" fill="#9a7fcf"/>
<circle cx="3072.00" cy="1351.40" r="8" fill="#9a7fcf"/>
<circle cx="3126.80" cy="1351.40" r="8" fill="#9a7fcf"/>
<circle cx="3181.60" cy="1351.40" r="8" fill="#9a7fcf"/>
<circle cx="3236.40" cy="1351.40" r="8" fill="#9a7fcf"/>
<circle cx="3291.20" cy="1572.70" r="8" fill="#9a7fcf"/>
</g></svg>
<div class="t" style="font-family:'Liberation Sans';font-size:24.42px;line-height:24.42px;font-weight:400;color:#7d878c;-webkit-text-stroke:0.35px #7d878c;left:1909.56px;top:652.00px;transform:scaleX(1.1200)">100%</div>
<div class="t" style="font-family:'Liberation Sans';font-size:24.42px;line-height:24.42px;font-weight:400;color:#7d878c;-webkit-text-stroke:0.35px #7d878c;left:1925.24px;top:788.50px;transform:scaleX(1.1200)">50%</div>
<div class="t" style="font-family:'Liberation Sans';font-size:24.42px;line-height:24.42px;font-weight:400;color:#7d878c;-webkit-text-stroke:0.35px #7d878c;left:1939.80px;top:925.30px;transform:scaleX(1.1200)">0%</div>
<div class="t" style="font-family:'Liberation Sans';font-size:24.42px;line-height:24.42px;font-weight:400;color:#7d878c;-webkit-text-stroke:0.35px #7d878c;left:2085.28px;top:951.50px;transform:scaleX(1.1200)">18:00</div>
<div class="t" style="font-family:'Liberation Sans';font-size:24.42px;line-height:24.42px;font-weight:400;color:#7d878c;-webkit-text-stroke:0.35px #7d878c;left:2241.84px;top:951.50px;transform:scaleX(1.1200)">21:00</div>
<div class="t" style="font-family:'Liberation Sans';font-size:24.42px;line-height:24.42px;font-weight:400;color:#7d878c;-webkit-text-stroke:0.35px #7d878c;left:2397.84px;top:951.50px;transform:scaleX(1.1200)">00:00</div>
<div class="t" style="font-family:'Liberation Sans';font-size:24.42px;line-height:24.42px;font-weight:400;color:#7d878c;-webkit-text-stroke:0.35px #7d878c;left:2553.84px;top:951.50px;transform:scaleX(1.1200)">03:00</div>
<div class="t" style="font-family:'Liberation Sans';font-size:24.42px;line-height:24.42px;font-weight:400;color:#7d878c;-webkit-text-stroke:0.35px #7d878c;left:2709.84px;top:951.50px;transform:scaleX(1.1200)">06:00</div>
<div class="t" style="font-family:'Liberation Sans';font-size:24.42px;line-height:24.42px;font-weight:400;color:#7d878c;-webkit-text-stroke:0.35px #7d878c;left:2865.84px;top:951.50px;transform:scaleX(1.1200)">09:00</div>
<div class="t" style="font-family:'Liberation Sans';font-size:24.42px;line-height:24.42px;font-weight:400;color:#7d878c;-webkit-text-stroke:0.35px #7d878c;left:3021.28px;top:951.50px;transform:scaleX(1.1200)">12:00</div>
<div class="t" style="font-family:'Liberation Sans';font-size:24.42px;line-height:24.42px;font-weight:400;color:#7d878c;-webkit-text-stroke:0.35px #7d878c;left:3177.28px;top:951.50px;transform:scaleX(1.1200)">15:00</div>
<div class="t" style="font-family:'Liberation Sans';font-size:24.42px;line-height:24.42px;font-weight:400;color:#7d878c;-webkit-text-stroke:0.35px #7d878c;left:3333.28px;top:951.50px;transform:scaleX(1.1200)">18:00</div>
<div class="t" style="font-family:'Liberation Sans';font-size:24.42px;line-height:24.42px;font-weight:400;color:#7d878c;-webkit-text-stroke:0.35px #7d878c;left:2048.32px;top:982.20px;transform:scaleX(1.1200)">Jun 9, 2024</div>
<div class="t" style="font-family:'Liberation Sans';font-size:24.42px;line-height:24.42px;font-weight:400;color:#7d878c;-webkit-text-stroke:0.35px #7d878c;left:2352.48px;top:982.20px;transform:scaleX(1.1200)">Jun 10, 2024</div>
<div class="t" style="font-family:'Liberation Sans';font-size:25.44px;line-height:25.44px;font-weight:400;color:#7d878c;-webkit-text-stroke:0.35px #7d878c;left:3078.81px;top:647.20px;transform:scaleX(1.0934)">Now: 10.021052631578947%</div>
<div class="t" style="font-family:'Liberation Sans';font-size:26.16px;line-height:26.16px;font-weight:400;color:#7d878c;-webkit-text-stroke:0.35px #7d878c;left:0;top:0;transform:translate(1880.30px,887.08px) rotate(-90deg) scaleX(1.0877)">Error rate (%)</div>
<div class="t" style="font-family:'Liberation Sans';font-size:24.42px;line-height:24.42px;font-weight:400;color:#7d878c;-webkit-text-stroke:0.35px #7d878c;left:1929.92px;top:1339.70px;transform:scaleX(1.1200)">60k</div>
<div class="t" style="font-family:'Liberation Sans';font-size:24.42px;line-height:24.42px;font-weight:400;color:#7d878c;-webkit-text-stroke:0.35px #7d878c;left:1929.92px;top:1421.80px;transform:scaleX(1.1200)">40k</div>
<div class="t" style="font-family:'Liberation Sans';font-size:24.42px;line-height:24.42px;font-weight:400;color:#7d878c;-webkit-text-stroke:0.35px #7d878c;left:1929.92px;top:1503.90px;transform:scaleX(1.1200)">20k</div>
<div class="t" style="font-family:'Liberation Sans';font-size:24.42px;line-height:24.42px;font-weight:400;color:#7d878c;-webkit-text-stroke:0.35px #7d878c;left:1959.04px;top:1585.50px;transform:scaleX(1.1200)">0</div>
<div class="t" style="font-family:'Liberation Sans';font-size:24.42px;line-height:24.42px;font-weight:400;color:#7d878c;-webkit-text-stroke:0.35px #7d878c;left:2050.88px;top:1607.80px;transform:scaleX(1.1200)">18:00</div>
<div class="t" style="font-family:'Liberation Sans';font-size:24.42px;line-height:24.42px;font-weight:400;color:#7d878c;-webkit-text-stroke:0.35px #7d878c;left:2215.74px;top:1607.80px;transform:scaleX(1.1200)">21:00</div>
<div class="t" style="font-family:'Liberation Sans';font-size:24.42px;line-height:24.42px;font-weight:400;color:#7d878c;-webkit-text-stroke:0.35px #7d878c;left:2380.04px;top:1607.80px;transform:scaleX(1.1200)">00:00</div>
<div class="t" style="font-family:'Liberation Sans';font-size:24.42px;line-height:24.42px;font-weight:400;color:#7d878c;-webkit-text-stroke:0.35px #7d878c;left:2544.34px;top:1607.80px;transform:scaleX(1.1200)">03:00</div>
<div class="t" style="font-family:'Liberation Sans';font-size:24.42px;line-height:24.42px;font-weight:400;color:#7d878c;-webkit-text-stroke:0.35px #7d878c;left:2708.64px;top:1607.80px;transform:scaleX(1.1200)">06:00</div>
<div class="t" style="font-family:'Liberation Sans';font-size:24.42px;line-height:24.42px;font-weight:400;color:#7d878c;-webkit-text-stroke:0.35px #7d878c;left:2872.94px;top:1607.80px;transform:scaleX(1.1200)">09:00</div>
<div class="t" style="font-family:'Liberation Sans';font-size:24.42px;line-height:24.42px;font-weight:400;color:#7d878c;-webkit-text-stroke:0.35px #7d878c;left:3036.68px;top:1607.80px;transform:scaleX(1.1200)">12:00</div>
<div class="t" style="font-family:'Liberation Sans';font-size:24.42px;line-height:24.42px;font-weight:400;color:#7d878c;-webkit-text-stroke:0.35px #7d878c;left:3200.98px;top:1607.80px;transform:scaleX(1.1200)">15:00</div>
<div class="t" style="font-family:'Liberation Sans';font-size:24.42px;line-height:24.42px;font-weight:400;color:#7d878c;-webkit-text-stroke:0.35px #7d878c;left:3365.28px;top:1607.80px;transform:scaleX(1.1200)">18:00</div>
<div class="t" style="font-family:'Liberation Sans';font-size:24.42px;line-height:24.42px;font-weight:400;color:#7d878c;-webkit-text-stroke:0.35px #7d878c;left:2013.92px;top:1638.30px;transform:scaleX(1.1200)">Jun 9, 2024</div>
<div class="t" style="font-family:'Liberation Sans';font-size:24.42px;line-height:24.42px;font-weight:400;color:#7d878c;-webkit-text-stroke:0.35px #7d878c;left:2334.78px;top:1638.30px;transform:scaleX(1.1200)">Jun 10, 2024</div>
<div class="t" style="font-family:'Liberation Sans';font-size:25.44px;line-height:25.44px;font-weight:400;color:#7d878c;-webkit-text-stroke:0.35px #7d878c;left:3187.81px;top:1306.80px;transform:scaleX(1.0941)">Now: 6086.87ms</div>
<div class="t" style="font-family:'Liberation Sans';font-size:26.89px;line-height:26.89px;font-weight:400;color:#7d878c;-webkit-text-stroke:0.35px #7d878c;left:0;top:0;transform:translate(1886.90px,1585.28px) rotate(-90deg) scaleX(1.0404)">Hourly latency (ms)</div>
</div></div>
<div style="position:absolute;left:3568px;top:895px;width:12px;height:335px;background:#a9b0b9;border-radius:6px"></div>
<div style="position:absolute;left:1794px;top:1946px;width:1772px;height:18px;background:linear-gradient(to bottom, rgba(255,255,255,0), rgba(255,255,255,0.75) 70%, #fff)"></div>
<div style="position:absolute;left:0;top:1940px;width:24px;height:24px;background:radial-gradient(circle at 100% 0, rgba(10,10,12,0) 23px, #0a0a0c 24.5px)"></div>
<div style="position:absolute;left:3560px;top:1940px;width:24px;height:24px;background:radial-gradient(circle at 0 0, rgba(10,10,12,0) 23px, #0a0a0c 24.5px)"></div>
</body></html>
